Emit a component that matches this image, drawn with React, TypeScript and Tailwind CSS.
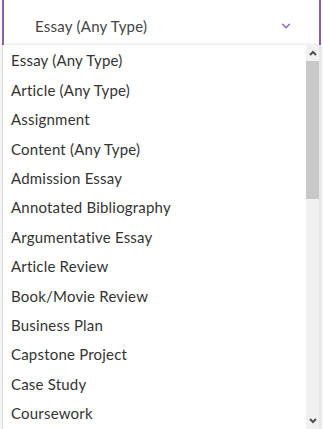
import { ChevronDown } from 'lucide-react';

const items = [
  'Essay (Any Type)',
  'Article (Any Type)',
  'Assignment',
  'Content (Any Type)',
  'Admission Essay',
  'Annotated Bibliography',
  'Argumentative Essay',
  'Article Review',
  'Book/Movie Review',
  'Business Plan',
  'Capstone Project',
  'Case Study',
  'Coursework',
];

export default function App() {
  return (
    <div className="w-[323px] h-[429px] bg-white overflow-hidden font-['Lato',sans-serif] text-[#333]">
      {/* select box */}
      <div className="mx-[2px] h-[45px] border-x-2 border-[#8e5ea2] flex items-end">
        <div className="flex items-center justify-between w-full pl-[31px] pr-[26px] pb-[8px]">
          <span className="text-[15px] tracking-[0.25px] text-[#444]">Essay (Any Type)</span>
          <ChevronDown size={14} strokeWidth={2.2} className="text-[#8e5ea2]" />
        </div>
      </div>

      {/* dropdown list */}
      <div className="mx-[2px] h-[384px] bg-white border-l border-[#ddd] border-r-2 border-r-[#e6e6e6] shadow-[0_0_4px_rgba(0,0,0,0.15)] flex">
        <ul className="flex-1 pt-[1px]">
          {items.map((item) => (
            <li key={item} className="h-[29.4px] flex items-center pl-[8px] text-[15px] tracking-[0.2px] text-[#333]">
              {item}
            </li>
          ))}
        </ul>
        <div className="w-[13px] bg-[#f1f1f1] flex flex-col">
          <div className="h-[16px] flex items-center justify-center">
            <svg width="8" height="6" viewBox="0 0 8 6">
              <path d="M1 5 L4 2 L7 5" stroke="#505050" strokeWidth="2" fill="none" />
            </svg>
          </div>
          <div className="h-[138px] bg-[#c8c8c8]" />
          <div className="flex-1" />
          <div className="h-[16px] flex items-center justify-center">
            <svg width="8" height="6" viewBox="0 0 8 6">
              <path d="M1 1 L4 4 L7 1" stroke="#505050" strokeWidth="2" fill="none" />
            </svg>
          </div>
        </div>
      </div>
    </div>
  );
}
